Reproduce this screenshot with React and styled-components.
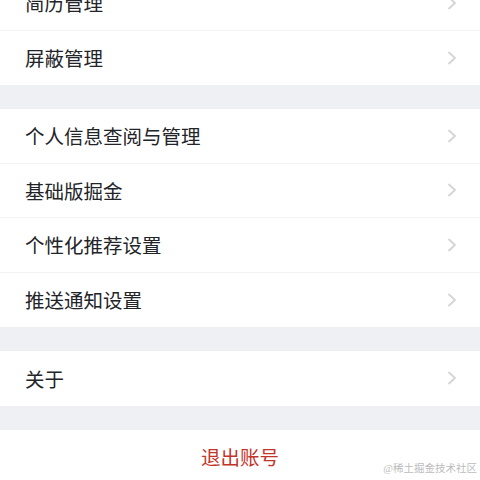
import React from 'react';
import styled, { createGlobalStyle } from 'styled-components';

const GlobalStyle = createGlobalStyle`
  html, body {
    margin: 0;
    padding: 0;
    background: #eef0f3;
  }
  body {
    font-family: "Noto Sans CJK SC", "Noto Sans", sans-serif;
    overflow: hidden;
  }
`;

const groups = [
  ['简历管理', '屏蔽管理'],
  ['个人信息查阅与管理', '基础版掘金', '个性化推荐设置', '推送通知设置'],
  ['关于'],
];

const Page = styled.div`
  position: relative;
  width: 480px;
  height: 480px;
  overflow: hidden;
  background: #eef0f3;
`;

const Scroller = styled.div`
  display: flex;
  flex-direction: column;
  gap: 24px;
  margin-top: -24px;
`;

const Group = styled.div`
  display: flex;
  flex-direction: column;
  background: #ffffff;
`;

const Row = styled.div`
  display: flex;
  align-items: center;
  justify-content: space-between;
  height: 54.5px;
  box-sizing: border-box;
  padding: 0 23px 0 25px;
  border-bottom: ${({ last }) => (last ? 'none' : '1px solid #f1f2f4')};
`;

const Label = styled.span`
  font-size: 19.5px;
  color: #222428;
`;

const Chevron = styled.svg`
  width: 10px;
  height: 14px;
  flex: none;
`;

const Logout = styled.div`
  display: flex;
  align-items: center;
  justify-content: center;
  height: 54px;
  background: #ffffff;
  font-size: 19.5px;
  color: #c2342a;
`;

const Watermark = styled.span`
  position: absolute;
  right: 3px;
  bottom: 5px;
  font-family: "Liberation Serif", "Noto Sans CJK SC", serif;
  font-size: 10.5px;
  color: #bcbcbc;
`;

const Arrow = () => (
  <Chevron viewBox="0 0 10 14">
    <path d="M2 1.5 L8 7 L2 12.5" fill="none" stroke="#d2d4d8" strokeWidth="1.8" strokeLinecap="round" strokeLinejoin="round" />
  </Chevron>
);

const App = () => (
  <Page>
    <GlobalStyle />
    <Scroller>
      {groups.map((items, g) => (
        <Group key={g}>
          {items.map((item, i) => (
            <Row key={item} last={i === items.length - 1}>
              <Label>{item}</Label>
              <Arrow />
            </Row>
          ))}
        </Group>
      ))}
      <Logout>退出账号</Logout>
    </Scroller>
    <Watermark>@稀土掘金技术社区</Watermark>
  </Page>
);

export default App;
